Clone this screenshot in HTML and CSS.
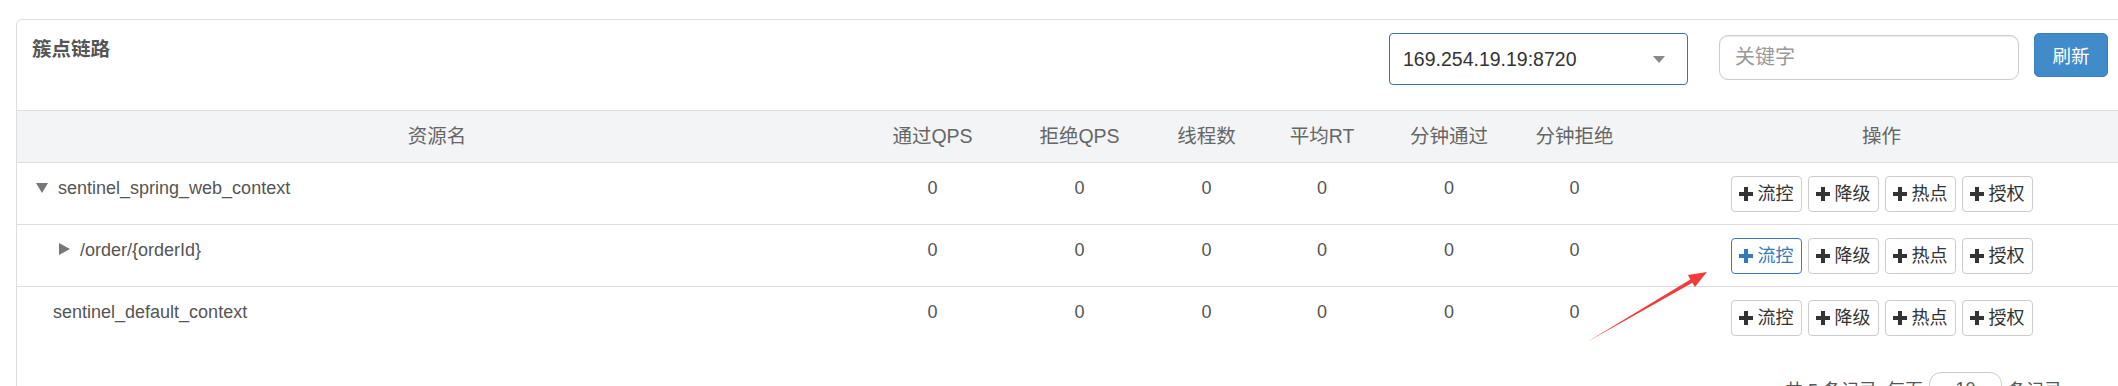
FILE: index.html
```html
<!DOCTYPE html>
<html lang="zh-CN">
<head>
    <meta charset="UTF-8">
    <title>簇点链路</title>
    <link rel="stylesheet" href="styles.css">
</head>
<body>
  <div class="card">
    <div class="toolbar">
      <span class="title">簇点链路</span>
      <div class="machine-select">
        <span>169.254.19.19:8720</span>
        <span class="caret"></span>
      </div>
      <input class="search" type="text" placeholder="关键字">
      <button class="btn-refresh">刷新</button>
    </div>

    <table class="tree-table">
      <colgroup>
        <col class="col-name">
        <col class="col-pass">
        <col class="col-block">
        <col class="col-thread">
        <col class="col-rt">
        <col class="col-min-pass">
        <col class="col-min-block">
        <col>
      </colgroup>
      <thead>
        <tr>
          <th>资源名</th>
          <th>通过QPS</th>
          <th>拒绝QPS</th>
          <th>线程数</th>
          <th>平均RT</th>
          <th>分钟通过</th>
          <th>分钟拒绝</th>
          <th>操作</th>
        </tr>
      </thead>
      <tbody>
        <tr>
          <td class="name level-0"><span class="toggle open"></span>sentinel_spring_web_context</td>
          <td>0</td><td>0</td><td>0</td><td>0</td><td>0</td><td>0</td>
          <td class="ops">
            <div class="ops-group">
              <button class="op-btn"><svg viewBox="0 0 14 14"><path d="M5 0h4v5h5v4H9v5H5V9H0V5h5z"/></svg>流控</button>
              <button class="op-btn"><svg viewBox="0 0 14 14"><path d="M5 0h4v5h5v4H9v5H5V9H0V5h5z"/></svg>降级</button>
              <button class="op-btn"><svg viewBox="0 0 14 14"><path d="M5 0h4v5h5v4H9v5H5V9H0V5h5z"/></svg>热点</button>
              <button class="op-btn"><svg viewBox="0 0 14 14"><path d="M5 0h4v5h5v4H9v5H5V9H0V5h5z"/></svg>授权</button>
            </div>
          </td>
        </tr>
        <tr>
          <td class="name level-1"><span class="toggle closed"></span>/order/{orderId}</td>
          <td>0</td><td>0</td><td>0</td><td>0</td><td>0</td><td>0</td>
          <td class="ops">
            <div class="ops-group">
              <button class="op-btn active"><svg viewBox="0 0 14 14"><path d="M5 0h4v5h5v4H9v5H5V9H0V5h5z"/></svg>流控</button>
              <button class="op-btn"><svg viewBox="0 0 14 14"><path d="M5 0h4v5h5v4H9v5H5V9H0V5h5z"/></svg>降级</button>
              <button class="op-btn"><svg viewBox="0 0 14 14"><path d="M5 0h4v5h5v4H9v5H5V9H0V5h5z"/></svg>热点</button>
              <button class="op-btn"><svg viewBox="0 0 14 14"><path d="M5 0h4v5h5v4H9v5H5V9H0V5h5z"/></svg>授权</button>
            </div>
          </td>
        </tr>
        <tr>
          <td class="name level-root">sentinel_default_context</td>
          <td>0</td><td>0</td><td>0</td><td>0</td><td>0</td><td>0</td>
          <td class="ops">
            <div class="ops-group">
              <button class="op-btn"><svg viewBox="0 0 14 14"><path d="M5 0h4v5h5v4H9v5H5V9H0V5h5z"/></svg>流控</button>
              <button class="op-btn"><svg viewBox="0 0 14 14"><path d="M5 0h4v5h5v4H9v5H5V9H0V5h5z"/></svg>降级</button>
              <button class="op-btn"><svg viewBox="0 0 14 14"><path d="M5 0h4v5h5v4H9v5H5V9H0V5h5z"/></svg>热点</button>
              <button class="op-btn"><svg viewBox="0 0 14 14"><path d="M5 0h4v5h5v4H9v5H5V9H0V5h5z"/></svg>授权</button>
            </div>
          </td>
        </tr>
      </tbody>
    </table>

    <div class="table-footer">
      <span>共 5 条记录, 每页</span>
      <span class="page-size">10</span>
      <span>条记录</span>
    </div>
  </div>

  <!-- red annotation arrow -->
  <svg class="note-arrow" viewBox="0 0 135 85">
    <polygon points="7,77 112.4,17.8 114.9,22.1 127,7 107.9,10.1 110.4,14.4"/>
  </svg>
</body>
</html>
```

FILE: styles.css
```css
html, body {
  overflow: hidden;
}
body {
  margin: 0;
  position: relative;
  background: #fff;
  font-family: "Liberation Sans", "Noto Sans CJK SC", sans-serif;
  color: #555;
}
.card {
  margin: 19px 0 0 16px;
  width: 2113px;
  border: 1px solid #ddd;
  border-radius: 6px;
  background: #fff;
}

/* top bar */
.toolbar {
  display: flex;
  align-items: flex-start;
  height: 90px;
  padding: 0 22px 0 15px;
}
.title {
  margin-top: 15px;
  font-size: 19.5px;
  line-height: 28px;
  font-weight: bold;
  color: #555;
}
.machine-select {
  margin: 13px 0 0 auto;
  width: 299px;
  height: 52px;
  box-sizing: border-box;
  border: 1px solid #3b72ad;
  border-radius: 4px;
  display: flex;
  align-items: center;
  justify-content: space-between;
  padding: 0 22px 0 13px;
  font-size: 19.5px;
  color: #333;
}
.caret {
  width: 0;
  height: 0;
  border-left: 6.5px solid transparent;
  border-right: 6.5px solid transparent;
  border-top: 7px solid #888;
}
.search {
  margin: 15px 0 0 31px;
  width: 300px;
  height: 45px;
  box-sizing: border-box;
  border: 1px solid #ccc;
  border-radius: 9px;
  padding: 0 15px;
  font-family: inherit;
  font-size: 20px;
  box-shadow: inset 0 1px 1px rgba(0, 0, 0, 0.075);
  outline: none;
}
.search::placeholder {
  color: #999;
}
.btn-refresh {
  margin: 13px 0 0 15px;
  width: 74px;
  height: 44px;
  border: 1px solid #3a80be;
  border-radius: 5px;
  background: #428bca;
  color: #fff;
  font-family: inherit;
  font-size: 18.5px;
  padding: 0;
}

/* table */
.tree-table {
  width: 100%;
  border-collapse: collapse;
  table-layout: fixed;
}
.col-name { width: 840px; }
.col-pass { width: 151px; }
.col-block { width: 143px; }
.col-thread { width: 111px; }
.col-rt { width: 120px; }
.col-min-pass { width: 134px; }
.col-min-block { width: 117px; }

.tree-table th {
  background: #f3f4f6;
  border-top: 1px solid #ddd;
  border-bottom: 1px solid #ddd;
  padding: 11px 0;
  line-height: 29px;
  font-size: 19.5px;
  font-weight: normal;
  color: #666;
  text-align: center;
}
.tree-table td {
  padding: 13px 0 12px;
  line-height: 24px;
  font-size: 18px;
  color: #555;
  text-align: center;
  vertical-align: top;
  border-bottom: 1px solid #ddd;
}
.tree-table tr:last-child td {
  border-bottom: none;
}
.tree-table td.name {
  text-align: left;
  white-space: nowrap;
}
.tree-table td.level-0 { padding-left: 19px; }
.tree-table td.level-1 { padding-left: 42px; }
.tree-table td.level-root { padding-left: 36px; }

.toggle {
  display: inline-block;
  width: 0;
  height: 0;
  vertical-align: middle;
  margin-right: 10px;
}
.toggle.open {
  border-left: 6px solid transparent;
  border-right: 6px solid transparent;
  border-top: 10px solid #777;
  position: relative;
  top: -1px;
}
.toggle.closed {
  border-top: 6.5px solid transparent;
  border-bottom: 6.5px solid transparent;
  border-left: 11px solid #777;
  position: relative;
  top: -2px;
}

.ops-group {
  display: flex;
  justify-content: center;
  gap: 6px;
}
.op-btn {
  display: inline-flex;
  align-items: center;
  gap: 5px;
  height: 36px;
  padding: 0 7px;
  border: 1px solid #ccc;
  border-radius: 4px;
  background: #fff;
  color: #333;
  font-family: inherit;
  font-size: 18px;
  line-height: 34px;
}
.op-btn svg {
  width: 14px;
  height: 14px;
  fill: currentColor;
}
.op-btn.active {
  border-color: #3579b8;
  color: #3579b8;
}

/* paging line, cut by the window */
.table-footer {
  display: flex;
  justify-content: flex-end;
  align-items: center;
  gap: 6px;
  padding: 24px 68px 0 0;
  font-size: 18px;
  color: #555;
}
.page-size {
  width: 73px;
  height: 34px;
  box-sizing: border-box;
  border: 1px solid #ccc;
  border-radius: 12px;
  text-align: center;
  line-height: 32px;
}

.note-arrow {
  position: absolute;
  left: 1580px;
  top: 265px;
  width: 135px;
  height: 85px;
  fill: #f23b3b;
}
```
